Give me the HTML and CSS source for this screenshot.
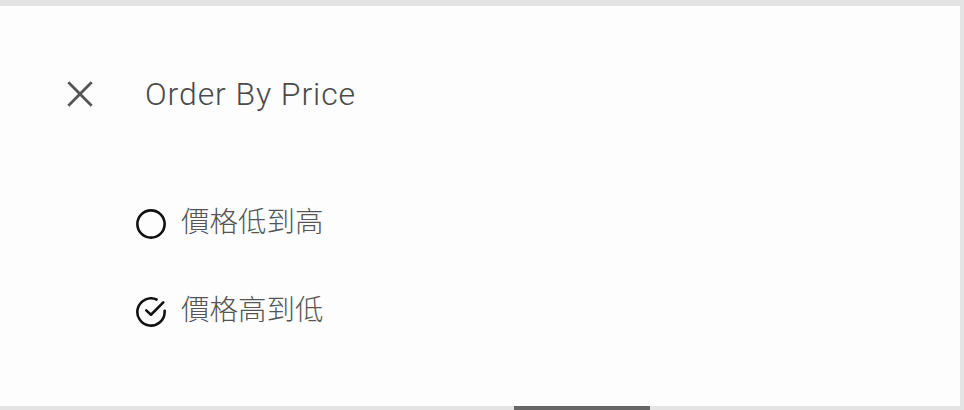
FILE: index.html
```html
<!DOCTYPE html>
<html lang="zh-Hant">
<head>
<meta charset="utf-8">
<title>Order By Price</title>
<link rel="stylesheet" href="styles.css">
</head>
<body>
<div class="panel">
  <div class="header">
    <button class="close" aria-label="close">
      <svg viewBox="0 0 24 24" width="28" height="28"><path d="M2 2 L22 22 M22 2 L2 22" stroke="#555" stroke-width="2.4" fill="none"/></svg>
    </button>
    <div class="title">Order By Price</div>
  </div>
  <div class="options">
    <div class="option">
      <svg class="icon" viewBox="1 1 22 22"><circle cx="12" cy="12" r="10" stroke="#111" stroke-width="1.9" fill="none"/></svg>
      <span class="label">價格低到高</span>
    </div>
    <div class="option">
      <svg class="icon" viewBox="1 1 22 22"><path d="M22 11.08V12a10 10 0 1 1-5.93-9.14" stroke="#111" stroke-width="1.9" fill="none" stroke-linecap="round" stroke-linejoin="round"/><polyline points="21 5 12 14.01 8.5 10.8" stroke="#111" stroke-width="1.9" fill="none" stroke-linecap="round" stroke-linejoin="round"/></svg>
      <span class="label">價格高到低</span>
    </div>
  </div>
</div>
<div class="footer"><div class="thumb"></div></div>
</body>
</html>
```
FILE: styles.css
```css
html, body {
  margin: 0;
  padding: 0;
}
body {
  background: #e4e4e4;
  width: 964px;
  height: 410px;
  overflow: hidden;
  font-family: Roboto, "Noto Sans CJK TC", sans-serif;
}
.panel {
  margin: 6px 4px 0 0;
  height: 400px;
  background: #fdfdfd;
  box-sizing: border-box;
  padding-top: 64px;
}
.header {
  display: flex;
  align-items: center;
  height: 48px;
  padding-left: 66px;
}
.close {
  width: 28px;
  height: 28px;
  padding: 0;
  border: 0;
  background: none;
  display: flex;
}
.title {
  margin-left: 51px;
  font-size: 32px;
  font-weight: 300;
  letter-spacing: 0.9px;
  color: #4a4a4a;
}
.options {
  margin-top: 82px;
  padding-left: 136px;
  display: flex;
  flex-direction: column;
  gap: 40px;
}
.option {
  display: flex;
  align-items: center;
  height: 48px;
}
.icon {
  width: 30px;
  height: 30px;
  flex: none;
}
.label {
  margin-left: 15px;
  margin-bottom: 10px;
  font-family: "Noto Sans CJK TC", sans-serif;
  font-size: 28.5px;
  font-weight: 300;
  color: #555;
}
.footer {
  display: flex;
  height: 4px;
  padding-left: 514px;
}
.thumb {
  width: 136px;
  height: 4px;
  background: #666;
}
```
